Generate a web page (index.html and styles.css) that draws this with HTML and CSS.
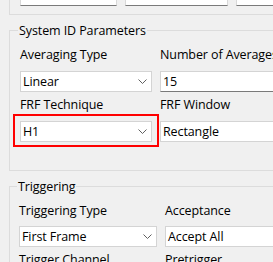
FILE: index.html
```html
<!DOCTYPE html>
<html>
<head>
    <title>System ID Settings</title>
    <link rel="stylesheet" href="styles.css">
</head>
<body>

    <div class="prev-group">
        <div class="prev-row">
            <div class="edit w1"></div>
            <div class="edit w2"></div>
            <div class="edit w3"></div>
        </div>
    </div>

    <fieldset class="group sysid">
        <legend>System ID Parameters</legend>
        <div class="grid">
            <div class="field">
                <label>Averaging Type</label>
                <div class="combo"><span>Linear</span><svg class="chev" width="9" height="5" viewBox="0 0 9 5"><polyline points="0.5,0.5 4.5,4.5 8.5,0.5"/></svg></div>
            </div>
            <div class="field">
                <label>Number of Averages</label>
                <div class="combo text-box"><span>15</span></div>
            </div>
            <div class="field">
                <label>FRF Technique</label>
                <div class="highlight">
                    <div class="combo"><span>H1</span><svg class="chev" width="9" height="5" viewBox="0 0 9 5"><polyline points="0.5,0.5 4.5,4.5 8.5,0.5"/></svg></div>
                </div>
            </div>
            <div class="field">
                <label>FRF Window</label>
                <div class="combo"><span>Rectangle</span></div>
            </div>
        </div>
    </fieldset>

    <fieldset class="group trig">
        <legend>Triggering</legend>
        <div class="grid">
            <div class="field">
                <label>Triggering Type</label>
                <div class="combo"><span>First Frame</span><svg class="chev" width="9" height="5" viewBox="0 0 9 5"><polyline points="0.5,0.5 4.5,4.5 8.5,0.5"/></svg></div>
            </div>
            <div class="field">
                <label>Acceptance</label>
                <div class="combo"><span>Accept All</span></div>
            </div>
            <div class="field">
                <label>Trigger Channel</label>
                <div class="combo"></div>
            </div>
            <div class="field">
                <label>Pretrigger</label>
                <div class="combo text-box"></div>
            </div>
        </div>
    </fieldset>

</body>
</html>
```

FILE: styles.css
```css
* {
    box-sizing: border-box;
}

body {
    margin: 0;
    width: 273px;
    height: 262px;
    overflow: hidden;
    background-color: #f0f0f0;
    font-family: "Open Sans", sans-serif;
    font-size: 12.5px;
    letter-spacing: -0.1px;
    color: #000;
}

.prev-group {
    height: 15px;
    margin-left: 9px;
    margin-right: -20px;
    border-left: 1px solid #dcdcdc;
    border-bottom: 1px solid #dcdcdc;
}

.prev-row {
    display: flex;
    gap: 8px;
    padding-left: 10px;
}

.edit {
    height: 6px;
    background-color: white;
    border: 1px solid #d9d9d9;
    border-top: none;
    border-bottom-color: #7a7a7a;
}

.w1 {width: 102px;}
.w2 {width: 109px;}
.w3 {width: 60px;}

.group {
    margin: 8px -40px 0 9px;
    padding: 9px 0 28px 10px;
    border: 1px solid #dcdcdc;
    min-width: 0;
}

.group legend {
    padding: 0 1px;
    margin-left: -2px;
    line-height: 15px;
}

.grid {
    display: grid;
    grid-template-columns: 132px 150px;
    column-gap: 8px;
    row-gap: 5px;
}

.trig {
    padding-left: 9px;
}

.trig .grid {
    grid-template-columns: 138px 150px;
}

.field label {
    display: block;
    line-height: 16px;
    margin-bottom: 8px;
    white-space: nowrap;
}

.trig .field label {
    margin-bottom: 7px;
}

.combo {
    height: 21px;
    display: flex;
    align-items: center;
    justify-content: space-between;
    padding: 0 4px 0 2px;
    line-height: 19px;
    background-color: white;
    border: 1px solid #d4d4d4;
    white-space: nowrap;
}

.text-box {
    border-bottom-color: #7a7a7a;
}

.chev {
    fill: none;
    stroke: #606060;
    stroke-width: 1;
}

.highlight {
    margin: -7px -7px -5px -7px;
    padding: 5px 5px 3px 5px;
    border: 2px solid #ff0000;
}
```
